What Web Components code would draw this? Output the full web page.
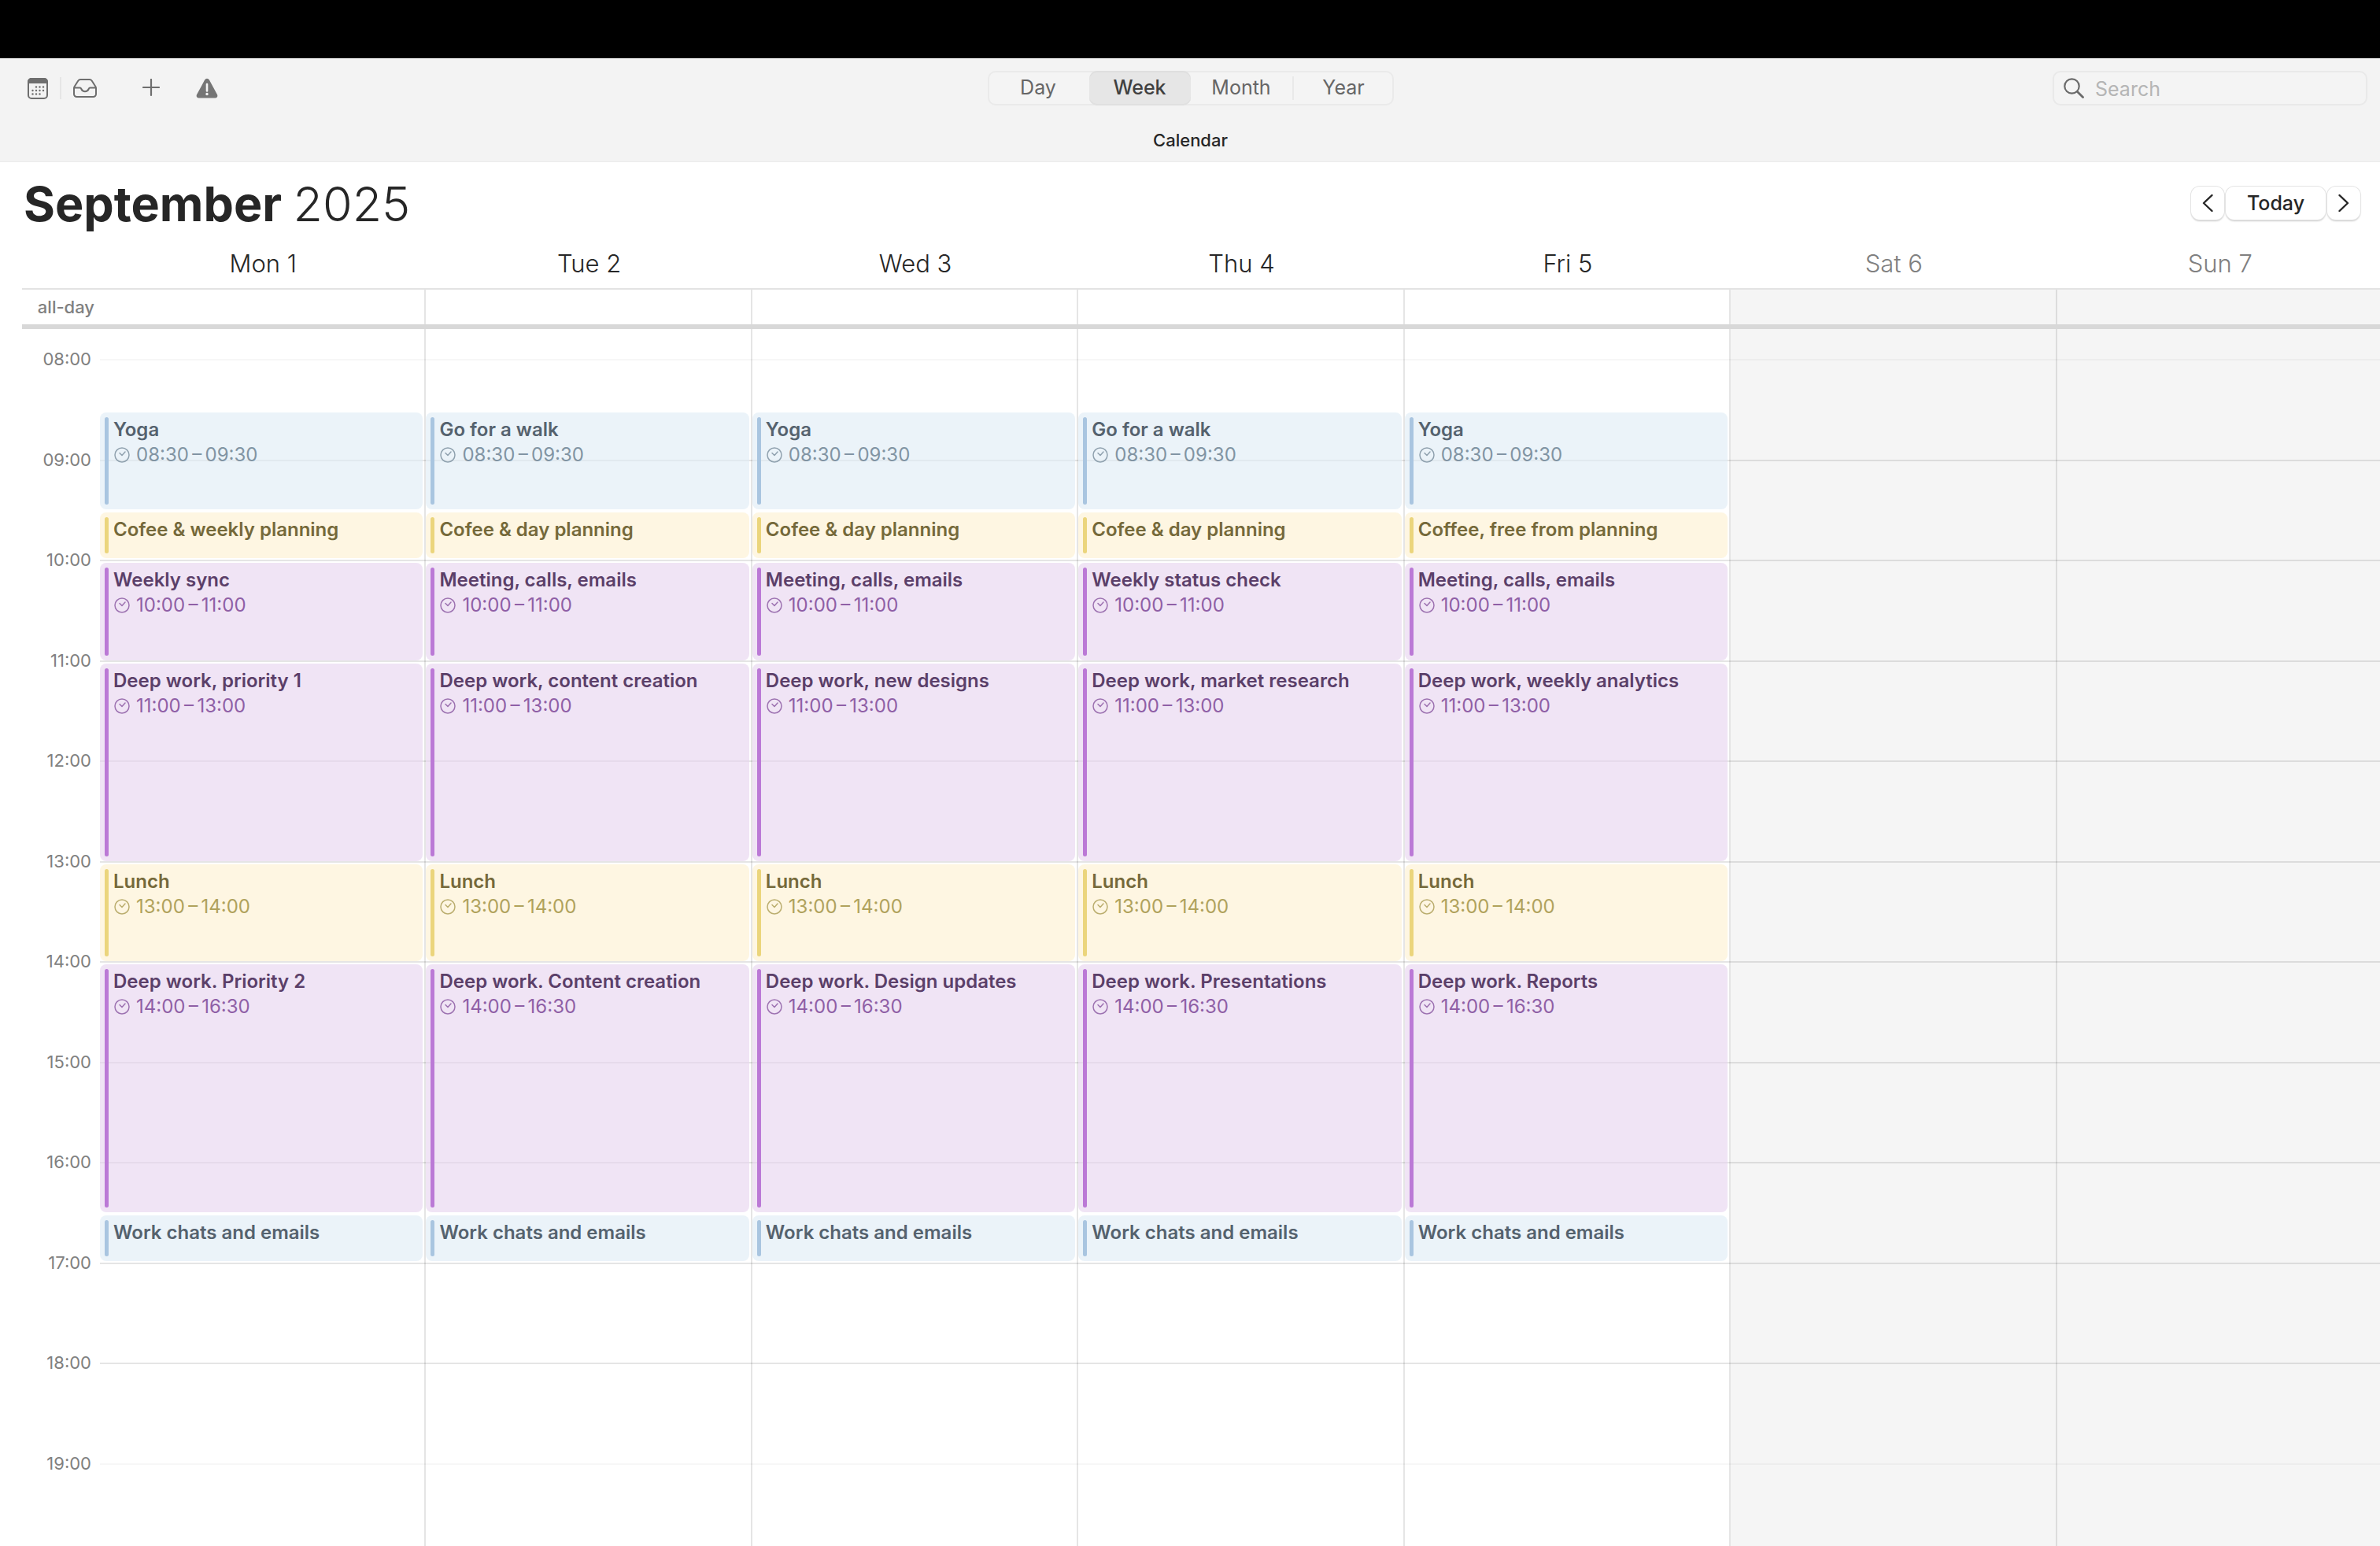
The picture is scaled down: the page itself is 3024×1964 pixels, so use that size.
<!DOCTYPE html>
<html lang="en">
<head>
<meta charset="utf-8">
<title>Calendar</title>
<style>
  html { overflow: hidden; }
  body {
    margin: 0;
    font-family: Inter, "Liberation Sans", sans-serif;
    color: #262626;
    background: #fff;
    --line: rgba(0, 0, 0, .1);
    --weekend: #f5f5f5;
    --gutter: 127px;
    --days: repeat(7, minmax(0, 1fr));
    --rows: 39px repeat(22, minmax(0, 1fr)) 104px;
  }
</style>
</head>
<body>
<calendar-app></calendar-app>

<script>
const define = (name, html, init) => {
  const template = document.createElement('template');
  template.innerHTML = html;
  customElements.define(name, class extends HTMLElement {
    constructor() {
      super();
      this.attachShadow({ mode: 'open' }).append(template.content.cloneNode(true));
    }
    connectedCallback() { if (init) init(this, this.shadowRoot); }
  });
};

const DAYS = ['Mon 1', 'Tue 2', 'Wed 3', 'Thu 4', 'Fri 5', 'Sat 6', 'Sun 7'];
const SLOTS = [
  ['08:30', '09:30', 'blue', ['Yoga', 'Go for a walk', 'Yoga', 'Go for a walk', 'Yoga']],
  ['09:30', '10:00', 'yellow', ['Cofee & weekly planning', 'Cofee & day planning', 'Cofee & day planning', 'Cofee & day planning', 'Coffee, free from planning']],
  ['10:00', '11:00', 'purple', ['Weekly sync', 'Meeting, calls, emails', 'Meeting, calls, emails', 'Weekly status check', 'Meeting, calls, emails']],
  ['11:00', '13:00', 'purple', ['Deep work, priority 1', 'Deep work, content creation', 'Deep work, new designs', 'Deep work, market research', 'Deep work, weekly analytics']],
  ['13:00', '14:00', 'yellow', ['Lunch', 'Lunch', 'Lunch', 'Lunch', 'Lunch']],
  ['14:00', '16:30', 'purple', ['Deep work. Priority 2', 'Deep work. Content creation', 'Deep work. Design updates', 'Deep work. Presentations', 'Deep work. Reports']],
  ['16:30', '17:00', 'blue', ['Work chats and emails', 'Work chats and emails', 'Work chats and emails', 'Work chats and emails', 'Work chats and emails']]
];
const HOURS = Array.from({ length: 12 }, (_, i) => String(i + 8).padStart(2, '0') + ':00');

/* Grid row line for a time: the day starts at 08:00, one row per half hour. */
const rowOf = time => {
  const [h, m] = time.split(':').map(Number);
  return (h - 8) * 2 + m / 30 + 2;
};

define('view-switch', `
  <style>
    :host { display: grid; grid-template-columns: repeat(4, 129px); height: 44px; box-sizing: border-box;
            border-radius: 10px; box-shadow: inset 0 0 0 2px #eaeaea; background: #f4f4f4; }
    button { border: 0; margin: 0; padding: 0 0 2px; background: none; font: 400 25px/40px Inter, sans-serif;
             color: #666; border-radius: 10px; }
    button[aria-pressed=true] { background: #e6e6e6; color: #404040; font-weight: 500; box-shadow: inset 0 2px #dfdfdf, inset 0 -2px #e0e0e0; }
    .divided { border-left: 2px solid #e9e9e9; border-radius: 0; margin: 7px 0; line-height: 26px; }
  </style>
  <button type="button" aria-pressed="false">Day</button>
  <button type="button" aria-pressed="true">Week</button>
  <button type="button" aria-pressed="false">Month</button>
  <button type="button" aria-pressed="false" class="divided">Year</button>`);

define('search-field', `
  <style>
    :host { display: block; }
    label { display: flex; align-items: center; gap: 14px; height: 44px; box-sizing: border-box; padding: 0 12px;
            border: 2px solid #e9e9e9; border-radius: 10px; background: #f4f4f4; width: 400px; }
    svg { width: 26px; height: 26px; flex: none; }
    input { flex: 1; min-width: 0; border: 0; padding: 2px 0 0; outline: 0; background: none; font: 400 25px/36px Inter, sans-serif; color: #262626; }
    input::placeholder { color: #b5b5b5; opacity: 1; }
  </style>
  <label>
    <svg viewBox="0 0 26 26" fill="none" stroke="#6b6b6b" stroke-width="2.2" stroke-linecap="round"><circle cx="10.5" cy="10.5" r="9.2"/><path d="M17.5 17.5l7 7" stroke-width="2.8"/></svg>
    <input type="search" placeholder="Search" aria-label="Search">
  </label>`);

define('tool-icons', `
  <style>
    :host { display: flex; align-items: center; height: 44px; }
    button { border: 0; margin: 0; padding: 0; background: none; display: block; }
    svg { display: block; }
    i { width: 2px; height: 28px; background: #e6e6e6; margin: 0 15px; }
    .add { margin-left: 58px; }
    .warn { margin-left: 46px; }
  </style>
  <button type="button" aria-label="Calendars">
    <svg width="26" height="27" viewBox="0 0 26 27"><rect x="1" y="1" width="24" height="25" rx="4" fill="none" stroke="#6e6e6e" stroke-width="2"/><path d="M0 7V5a5 5 0 0 1 5-5h16a5 5 0 0 1 5 5v2z" fill="#6e6e6e"/>
    <g fill="#6e6e6e"><circle cx="11" cy="11.500" r="1.200"/><circle cx="15.500" cy="11.500" r="1.200"/><circle cx="20" cy="11.500" r="1.200"/><circle cx="6.500" cy="16" r="1.200"/><circle cx="11" cy="16" r="1.200"/><circle cx="15.500" cy="16" r="1.200"/><circle cx="20" cy="16" r="1.200"/><circle cx="6.500" cy="20.500" r="1.200"/><circle cx="11" cy="20.500" r="1.200"/><circle cx="15.500" cy="20.500" r="1.200"/></g></svg>
  </button>
  <i></i>
  <button type="button" aria-label="Inbox">
    <svg width="30" height="25" viewBox="0 0 30 25" fill="none" stroke="#6e6e6e" stroke-width="2" stroke-linejoin="round"><path d="M1 12v7.500A3.500 3.500 0 0 0 4.500 23h21a3.500 3.500 0 0 0 3.500-3.500V12q0-1-.6-2l-4.600-7.200Q22.700 1 20.700 1H9.300Q7.300 1 6.200 2.800L1.600 10q-.6 1-.6 2z"/><path d="M1.200 11.500h7.300q1.300 0 1.800 1.500 1.300 3.200 4.700 3.200t4.700-3.200q.5-1.500 1.800-1.500h7.300"/></svg>
  </button>
  <button type="button" class="add" aria-label="New event">
    <svg width="22" height="24" viewBox="0 0 22 24" stroke="#6e6e6e" stroke-width="2.200" stroke-linecap="round"><path d="M11 1v20M1 11h20"/></svg>
  </button>
  <button type="button" class="warn" aria-label="Account problem">
    <svg width="28" height="26" viewBox="0 0 28 26"><path d="M14 .8q1.900 0 2.900 1.800l10 18.500q.9 1.700 0 3.100-.8 1.300-2.700 1.300H3.800q-1.900 0-2.700-1.300-.9-1.400 0-3.100l10-18.500Q12.100.8 14 .8z" fill="#757575"/><path d="M14 8v8.500" stroke="#f4f4f4" stroke-width="2.600" stroke-linecap="round"/><circle cx="14" cy="20.500" r="1.700" fill="#f4f4f4"/></svg>
  </button>`);

define('window-toolbar', `
  <style>
    :host { display: block; background: #f3f3f3; border-bottom: 1px solid #ebebeb; padding: 16px 16px 0 35px; }
    .bar { display: grid; grid-template-columns: 1fr auto 1fr; align-items: center; }
    view-switch { margin-right: 18px; }
    search-field { justify-self: end; }
    p { margin: 30px 18px 13px 0; text-align: center; font-weight: 500; font-size: 22px; line-height: 28px; }
  </style>
  <div class="bar"><tool-icons></tool-icons><view-switch></view-switch><search-field></search-field></div>
  <p>Calendar</p>`);

define('month-header', `
  <style>
    :host { display: flex; align-items: center; justify-content: space-between; height: 104px; padding: 0 25px 0 30px; }
    h1 { margin: 0; padding-top: 2px; font-size: 61px; line-height: 80px; font-weight: 700; color: #262626; }
    h1 span { font-weight: 300; }
    nav { display: flex; gap: 2px; }
    button { height: 42px; border: 0; margin: 0; padding: 0 0 1px; width: 42px; background: #fff; border-radius: 11px; color: #262626;
             box-shadow: 0 0 0 1px #e4e4e4, 0 2px 2px #c9c9c9; font: 450 25px/40px Inter, sans-serif;
             display: flex; align-items: center; justify-content: center; }
    .today { width: 127px; }
    svg { width: 14px; height: 24px; fill: none; stroke: #262626; stroke-width: 2.4; stroke-linecap: round; stroke-linejoin: round; }
  </style>
  <h1>September <span>2025</span></h1>
  <nav aria-label="Week navigation">
    <button type="button" aria-label="Previous week"><svg viewBox="0 0 14 24"><path d="M12.500 2L2 12l10.500 10"/></svg></button>
    <button type="button" class="today">Today</button>
    <button type="button" aria-label="Next week"><svg viewBox="0 0 14 24"><path d="M1.500 2L12 12 1.500 22"/></svg></button>
  </nav>`);

define('day-names', `
  <style>
    :host { display: grid; grid-template-columns: var(--days); margin: 0 -4px 0 var(--gutter); padding-bottom: 6px; }
    span { text-align: center; font-weight: 350; font-size: 31px; line-height: 50px; }
    .off { color: #808080; }
  </style>`, (host, root) => {
  DAYS.forEach((name, i) => {
    const el = document.createElement('span');
    el.textContent = name;
    if (i > 4) el.className = 'off';
    root.append(el);
  });
});

define('all-day-row', `
  <style>
    :host { display: grid; grid-template-columns: 99px var(--days); margin: 0 -4px 0 28px; height: 44px;
            border-top: 2px solid #e3e3e3; border-bottom: 6px solid #d8d8d8; }
    div { border-right: 2px solid var(--line); }
    .off { background: var(--weekend); }
    span { font-weight: 500; font-size: 22px; line-height: 44px; color: #808080; padding-right: 7px; text-align: right; }
  </style>
  <span>all-day</span><div></div><div></div><div></div><div></div><div></div><div class="off"></div><div class="off"></div>`);

define('time-axis', `
  <style>
    :host { display: grid; grid-template-rows: var(--rows); text-align: right; padding-right: 11px; }
    time { font-size: 22px; line-height: 28px; height: 28px; margin-top: -15px; color: #808080; }
  </style>`, (host, root) => {
  HOURS.forEach(hour => {
    const el = document.createElement('time');
    el.textContent = hour;
    el.style.gridRow = rowOf(hour);
    root.append(el);
  });
});

define('day-column', `
  <style>
    :host { display: grid; grid-template-rows: var(--rows); grid-template-columns: minmax(0, 1fr); border-right: 2px solid var(--line); }
    :host([weekend]) { background: var(--weekend); }
    hr { grid-column: 1; border: 0; height: 2px; margin: -1px -2px 0 0; background: rgba(0, 0, 0, .1); }
    hr.faint { background: rgba(0, 0, 0, .03); }
  </style>
  <slot></slot>`, (host, root) => {
  HOURS.forEach((hour, i) => {
    const el = document.createElement('hr');
    el.style.gridRow = rowOf(hour);
    if (i === 0 || i === HOURS.length - 1) el.className = 'faint';
    root.insertBefore(el, root.querySelector('slot'));
  });
});

define('calendar-event', `
  <style>
    :host { grid-column: 1; display: flex; gap: 6px; box-sizing: border-box; min-height: 0; margin: 3px 2px 1px 0; padding: 6px;
            border-radius: 8px; background: var(--fill); color: var(--title); }
    :host([brief]) { margin-bottom: 3px; }
    :host([tone=blue])   { --fill: rgba(223, 235, 245, .62); --bar: #a9c5e0; --title: #55626e; --time: #8194a3; }
    :host([tone=yellow]) { --fill: rgba(253, 240, 209, .62); --bar: #ebd57c; --title: #75693a; --time: #b0a25c; }
    :host([tone=purple]) { --fill: rgba(231, 211, 239, .62); --bar: #bb79d6; --title: #5b3f69; --time: #8f5fa6; }
    i { width: 5px; border-radius: 3px; background: var(--bar); flex: none; }
    div { min-width: 0; white-space: nowrap; }
    b { display: block; font-weight: 600; font-size: 24px; line-height: 32px; }
    p { margin: 0; display: flex; align-items: center; gap: 8px; font-size: 24px; line-height: 32px; color: var(--time); }
    svg { width: 20px; height: 20px; margin-left: 1px; fill: none; stroke: currentColor; stroke-width: 1.500; stroke-linecap: round; stroke-linejoin: round; opacity: .85; }
  </style>
  <i></i>
  <div><b><slot></slot></b></div>`, (host, root) => {
  const start = host.getAttribute('start'), end = host.getAttribute('end');
  host.style.gridRow = rowOf(start) + ' / ' + rowOf(end);
  if (host.hasAttribute('brief')) return;
  const line = document.createElement('p');
  line.innerHTML = '<svg viewBox="0 0 20 20"><circle cx="10" cy="10" r="9"/><path d="M7 7.500l3 3 4-4.500"/></svg><time></time>';
  line.querySelector('time').textContent = start + '\u2009–\u2009' + end;
  root.querySelector('div').append(line);
});

define('week-grid', `
  <style>
    :host { flex: 1; display: grid; grid-template-columns: var(--gutter) var(--days); margin-right: -4px; min-height: 1200px; }
  </style>
  <time-axis></time-axis>`, (host, root) => {
  DAYS.forEach((name, i) => {
    const day = document.createElement('day-column');
    if (i > 4) day.setAttribute('weekend', '');
    else SLOTS.forEach(([start, end, tone, titles]) => {
      const event = document.createElement('calendar-event');
      event.setAttribute('start', start);
      event.setAttribute('end', end);
      event.setAttribute('tone', tone);
      if (rowOf(end) - rowOf(start) === 1) event.setAttribute('brief', '');
      event.textContent = titles[i];
      day.append(event);
    });
    root.append(day);
  });
});

define('calendar-app', `
  <style>
    :host { display: flex; flex-direction: column; min-height: 100vh; overflow: hidden; }
    .notch { height: 74px; background: #000; }
  </style>
  <div class="notch"></div>
  <window-toolbar></window-toolbar>
  <month-header></month-header>
  <day-names></day-names>
  <all-day-row></all-day-row>
  <week-grid></week-grid>`);
</script>
</body>
</html>
